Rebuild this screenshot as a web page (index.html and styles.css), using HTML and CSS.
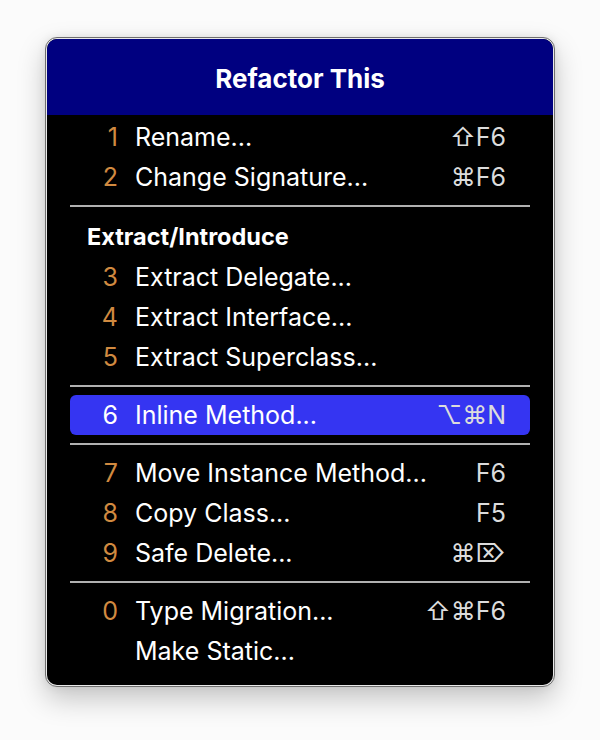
FILE: index.html
```html
<!DOCTYPE html>
<html>
<head>
<meta charset="utf-8">
<link rel="stylesheet" href="styles.css">
</head>
<body>
<div class="window">
  <div class="panel">
    <div class="title">Refactor This</div>
    <div class="list">
      <div class="row"><span class="num">1</span><span class="label">Rename...</span><span class="keys">⇧F6</span></div>
      <div class="row"><span class="num">2</span><span class="label">Change Signature...</span><span class="keys">⌘F6</span></div>
      <div class="sep"></div>
      <div class="section">Extract/Introduce</div>
      <div class="row"><span class="num">3</span><span class="label">Extract Delegate...</span><span class="keys"></span></div>
      <div class="row"><span class="num">4</span><span class="label">Extract Interface...</span><span class="keys"></span></div>
      <div class="row"><span class="num">5</span><span class="label">Extract Superclass...</span><span class="keys"></span></div>
      <div class="sep"></div>
      <div class="row active"><span class="num">6</span><span class="label">Inline Method...</span><span class="keys">⌥⌘N</span></div>
      <div class="sep"></div>
      <div class="row"><span class="num">7</span><span class="label">Move Instance Method...</span><span class="keys">F6</span></div>
      <div class="row"><span class="num">8</span><span class="label">Copy Class...</span><span class="keys">F5</span></div>
      <div class="row"><span class="num">9</span><span class="label">Safe Delete...</span><span class="keys">⌘⌦</span></div>
      <div class="sep"></div>
      <div class="row"><span class="num">0</span><span class="label">Type Migration...</span><span class="keys">⇧⌘F6</span></div>
      <div class="row"><span class="num"></span><span class="label">Make Static...</span><span class="keys"></span></div>
    </div>
  </div>
</div>
</body>
</html>
```

FILE: styles.css
```css
html, body {
  margin: 0;
  padding: 0;
  background: #fbfbfb;
}
body {
  width: 600px;
  height: 740px;
  font-family: Inter, "Noto Sans", "DejaVu Sans", sans-serif;
}
.window {
  position: relative;
  margin: 37px 0 0 45px;
  width: 506px;
  border: 1px solid #6e6e6e;
  border-radius: 12px;
  padding: 1px;
  background: #e9e9e9;
  box-shadow: 0 12px 28px rgba(0, 0, 0, 0.22), 0 0 10px rgba(0, 0, 0, 0.08);
}
.panel {
  background: #000;
  border-radius: 10px;
  overflow: hidden;
}
.title {
  height: 74px;
  padding-top: 2px;
  background: #000080;
  color: #fff;
  font-weight: 700;
  font-size: 26px;
  display: flex;
  align-items: center;
  justify-content: center;
}
.list {
  padding: 2px 0 14px;
}
.row {
  display: flex;
  align-items: center;
  height: 40px;
  margin: 0 23px;
  padding-right: 24px;
  border-radius: 6px;
  color: #fff;
  font-size: 25px;
}
.row.active {
  background: #3535f2;
}
.num {
  width: 48px;
  text-align: right;
  color: #d18a40;
  flex: none;
}
.row.active .num {
  color: #fff;
}
.label {
  margin-left: 17px;
  flex: 1;
  white-space: nowrap;
}
.keys {
  color: #dcdcdc;
  white-space: nowrap;
  font-family: Inter, "DejaVu Sans", sans-serif;
}
.sep {
  height: 2px;
  background: #b0b0b0;
  margin: 8px 23px;
}
.section {
  height: 42px;
  display: flex;
  align-items: center;
  padding-left: 40px;
  color: #fff;
  font-weight: 700;
  font-size: 23.5px;
}
```
